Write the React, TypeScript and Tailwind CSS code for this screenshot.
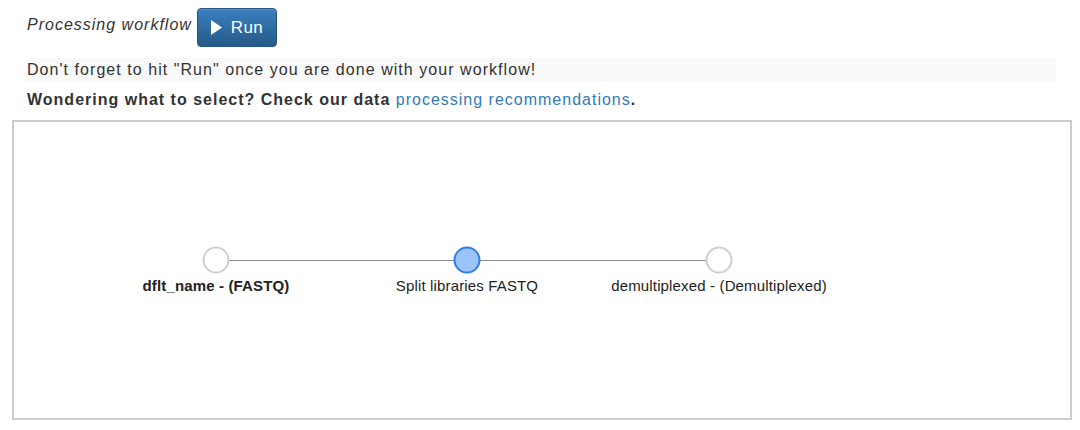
import React from "react";

type Node = {
  id: string;
  label: string;
  x: number; // center, relative to the canvas padding box
  active?: boolean;
  bold?: boolean;
};

const NODES: Node[] = [
  { id: "input", label: "dflt_name - (FASTQ)", x: 202, bold: true },
  { id: "split", label: "Split libraries FASTQ", x: 453, active: true },
  { id: "output", label: "demultiplexed - (Demultiplexed)", x: 705 },
];

const NODE_Y = 138;
const RADIUS = 12.5;

function PlayIcon() {
  return (
    <svg width="11" height="15" viewBox="0 0 11 15" className="shrink-0">
      <path d="M0 0 L11 7.5 L0 15 Z" fill="white" />
    </svg>
  );
}

function WorkflowCanvas() {
  const first = NODES[0];
  const last = NODES[NODES.length - 1];

  return (
    <div className="relative ml-[12px] h-[300px] w-[1060px] border-2 border-[#cccccc] bg-white">
      {/* edges + nodes */}
      <svg className="absolute inset-0 h-full w-full">
        <line
          x1={first.x + RADIUS}
          y1={NODE_Y + 0.5}
          x2={last.x - RADIUS}
          y2={NODE_Y + 0.5}
          stroke="#8a8a8a"
          strokeWidth={1}
        />
        {NODES.map((n) => (
          <circle
            key={n.id}
            cx={n.x}
            cy={NODE_Y}
            r={RADIUS}
            fill={n.active ? "#9dc3fb" : "#ffffff"}
            stroke={n.active ? "#2f7fe6" : "#cfcfcf"}
            strokeWidth={2}
          />
        ))}
      </svg>

      {/* labels */}
      {NODES.map((n) => (
        <div
          key={n.id}
          className={`absolute top-[154px] -translate-x-1/2 whitespace-nowrap text-[15px] leading-[20px] tracking-[0.15px] text-[#222] ${
            n.bold ? "font-bold" : ""
          }`}
          style={{ left: n.x }}
        >
          {n.label}
        </div>
      ))}
    </div>
  );
}

export default function App() {
  return (
    <div className="h-[430px] w-[1080px] bg-white font-['Liberation_Sans',Arial,sans-serif] text-[#333]">
      <div className="flex items-start pl-[27px]">
        <span className="mt-[14px] text-[16px] italic leading-[22px] tracking-[1px]">Processing workflow</span>
        <button className="ml-[5px] mt-[8px] flex h-[39px] items-center gap-[9px] rounded-[4px] border border-[#245580] bg-gradient-to-b from-[#3a80c0] to-[#265a88] px-[13px] text-[17px] leading-none tracking-[0.3px] text-white shadow-[inset_0_1px_0_rgba(255,255,255,0.15)]">
          <PlayIcon />
          <span>Run</span>
        </button>
      </div>

      <div className="ml-[26px] mt-[11px] h-[24px] w-[1030px] bg-[#f9f9f9] pl-[1px] text-[16px] leading-[24px] tracking-[1.05px]">
        Don't forget to hit "Run" once you are done with your workflow!
      </div>

      <p className="ml-[27px] mt-[7px] text-[16px] font-bold leading-[22px] tracking-[1px]">
        Wondering what to select? Check our data{" "}
        <a href="#" className="font-normal text-[#337ab7]">
          processing recommendations
        </a>
        .
      </p>

      <div className="mt-[9px]">
        <WorkflowCanvas />
      </div>
    </div>
  );
}
